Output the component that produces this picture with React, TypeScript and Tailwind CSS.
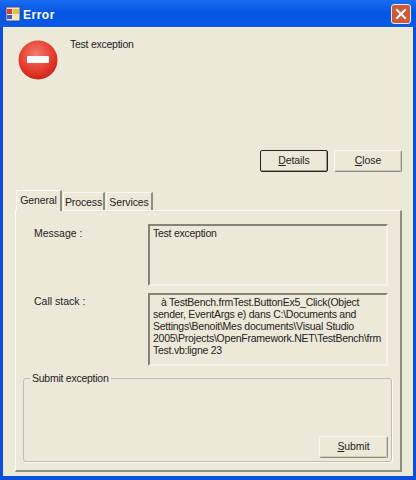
import React from 'react';

const font = { fontFamily: '"Liberation Sans", Arial, sans-serif' };

const XpButton = ({ label, hot, focused, className }: { label: string; hot: string; focused?: boolean; className: string }) => {
  const rest = label.slice(hot.length);
  return (
    <button
      className={`h-[22px] rounded-[2px] bg-[#ece9d8] text-[10.5px] tracking-[-0.1px] text-[#222] ${
        focused
          ? 'border border-[#222] shadow-[inset_-1px_-1px_0_#9c9a8c]'
          : 'border border-[#f8f7f0] border-r-[#8f8d80] border-b-[#8f8d80] shadow-[inset_-1px_-1px_0_#cfccbc]'
      } ${className}`}
    >
      <span className="underline">{hot}</span>
      {rest}
    </button>
  );
};

const Tab = ({ label, active, className }: { label: string; active?: boolean; className: string }) => (
  <div
    className={`flex items-center justify-center bg-[#ece9d8] text-[10.5px] tracking-[-0.1px] text-[#222] border-l border-t border-[#fbfaf4] border-r-2 border-r-[#8f8d80] ${
      active ? 'h-[21px] -mb-px z-10' : 'h-[18px] pt-[3px]'
    } ${className}`}
  >
    {label}
  </div>
);

export default function App() {
  return (
    <div className="w-[416px] h-[480px] flex flex-col overflow-hidden bg-[#0a50dc]" style={font}>
      <div className="h-[27px] shrink-0 flex items-center pl-[5px] pr-[5px] bg-gradient-to-b from-[#1a6cf0] via-[#0454e2] to-[#0a5ae8]">
        <svg width="16" height="16" viewBox="0 0 16 16" className="shrink-0">
          <rect x="1" y="1" width="14" height="14" fill="#e8e8f0" stroke="#3a4a90" />
          <rect x="2" y="3" width="5" height="5" fill="#d8402c" />
          <rect x="8" y="3" width="6" height="5" fill="#f0c030" />
          <rect x="2" y="9" width="5" height="4" fill="#3a60c0" />
          <rect x="8" y="9" width="6" height="4" fill="#f4e8a0" />
        </svg>
        <span className="ml-[2px] pt-[2px] text-[12px] font-bold tracking-[0.5px] text-white">Error</span>
        <div className="ml-auto w-[20px] h-[20px] rounded-[3px] border border-[#e8e8f0] bg-[#cf5a38] flex items-center justify-center">
          <svg width="12" height="12" viewBox="0 0 12 12">
            <path d="M2 2l8 8M10 2l-8 8" stroke="#fff" strokeWidth="2" strokeLinecap="square" />
          </svg>
        </div>
      </div>

      <div className="flex-1 mx-[3px] mb-[4px] bg-[#ece9d8] border-t border-[#f6f5ec] flex flex-col min-h-0 pl-[12px] pr-[11px]">
        <div className="flex h-[122px] shrink-0 pl-[3px]">
          <svg width="40" height="40" viewBox="0 0 40 40" className="mt-[12px] shrink-0">
            <defs>
              <radialGradient id="stop" cx="0.45" cy="0.35" r="0.75">
                <stop offset="0" stopColor="#f47a6c" />
                <stop offset="0.6" stopColor="#e43a2c" />
                <stop offset="1" stopColor="#b81c14" />
              </radialGradient>
            </defs>
            <circle cx="20" cy="20" r="19.5" fill="url(#stop)" />
            <rect x="9" y="16" width="22" height="7" rx="1" fill="#fff" />
          </svg>
          <div className="ml-[12px] mt-[9px] text-[10.5px] tracking-[-0.25px] leading-[14px] text-[#222]">Test exception</div>
        </div>

        <div className="flex justify-end gap-[6px] shrink-0">
          <XpButton label="Details" hot="D" focused className="w-[68px]" />
          <XpButton label="Close" hot="C" className="w-[68px]" />
        </div>

        <div className="flex items-end h-[38px] shrink-0 pl-[1px] gap-[1px]">
          <Tab label="General" active className="w-[46px]" />
          <Tab label="Process" className="w-[42px]" />
          <Tab label="Services" className="w-[47px]" />
        </div>

        <div className="h-[262px] shrink-0 border border-[#fbfaf4] border-r-2 border-b-2 border-r-[#8f8d80] border-b-[#8f8d80] flex flex-col pl-[7px] pr-[9px] pt-[13px] text-[10.5px] tracking-[-0.25px] text-[#222]">
          <div className="flex h-[62px] shrink-0">
            <div className="w-[125px] pl-[11px] pt-[2px] leading-[14px] tracking-[0px]">Message :</div>
            <div className="w-[240px] border-2 border-[#85847a] border-r-[#f4f3ea] border-b-[#f4f3ea] pl-[3px] pt-[1px] leading-[12px]">
              Test exception
            </div>
          </div>
          <div className="flex h-[73px] mt-[7px] shrink-0">
            <div className="w-[125px] pl-[11px] pt-[1px] leading-[14px] tracking-[0px]">Call stack :</div>
            <div className="w-[240px] border-2 border-[#85847a] border-r-[#f4f3ea] border-b-[#f4f3ea] pl-[3px] pt-[1px] leading-[12px] whitespace-nowrap">
              <span className="ml-[8px]">à TestBench.frmTest.ButtonEx5_Click(Object</span>
              <br />
              sender, EventArgs e) dans C:\Documents and
              <br />
              Settings\Benoit\Mes documents\Visual Studio
              <br />
              2005\Projects\OpenFramework.NET\TestBench\frm
              <br />
              Test.vb:ligne 23
            </div>
          </div>
          <div className="relative h-[84px] mt-[12px] shrink-0 w-[369px] border border-[#bdbcae] rounded-[3px] flex justify-end items-end pr-[3px] pb-[3px] shadow-[1px_1px_0_#fbfaf4]">
            <span className="absolute left-[6px] -top-[8px] bg-[#ece9d8] px-[2px] leading-[14px]">Submit exception</span>
            <XpButton label="Submit" hot="S" className="w-[69px]" />
          </div>
        </div>
      </div>
    </div>
  );
}
